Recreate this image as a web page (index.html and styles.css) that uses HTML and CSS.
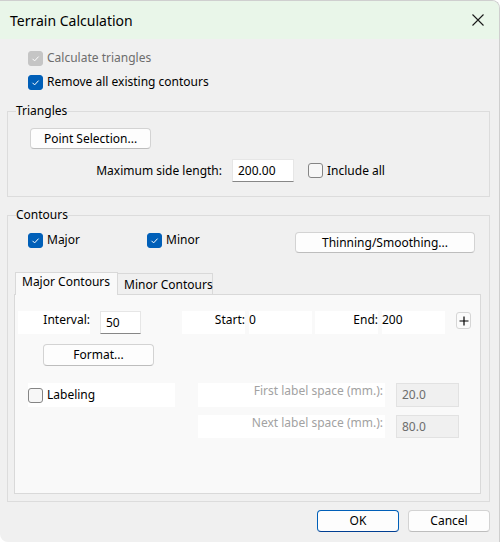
FILE: index.html
```html
<!DOCTYPE html>
<html lang="en">
<head>
  <meta charset="UTF-8">
  <title>Terrain Calculation</title>
  <link rel="stylesheet" href="styles.css">
</head>
<body>
  <div class="window">
    <div class="titlebar">
      <span class="title">Terrain Calculation</span>
      <span class="close">
        <svg width="12" height="12" viewBox="0 0 12 12"><path d="M0.5 0.5 L11.5 11.5 M11.5 0.5 L0.5 11.5" stroke="#1a1a1a" stroke-width="1.1" fill="none"/></svg>
      </span>
    </div>

    <div class="content">
      <div class="checks">
        <label class="check disabled">
          <span class="box checked"><svg width="15" height="15" viewBox="0 0 15 15"><path d="M4.5 7.8 L6.6 9.9 L10.6 5.6" stroke="#fff" stroke-width="1" fill="none"/></svg></span>
          Calculate triangles
        </label>
        <label class="check">
          <span class="box checked"><svg width="15" height="15" viewBox="0 0 15 15"><path d="M4.5 7.8 L6.6 9.9 L10.6 5.6" stroke="#fff" stroke-width="1" fill="none"/></svg></span>
          Remove all existing contours
        </label>
      </div>

      <fieldset class="group triangles">
        <legend>Triangles</legend>
        <button class="btn point-btn">Point Selection...</button>
        <div class="side-row">
          <span class="side-label">Maximum side length:</span>
          <span class="field side-field">200.00</span>
          <label class="check include-all">
            <span class="box"></span>
            Include all
          </label>
        </div>
      </fieldset>

      <fieldset class="group contours">
        <legend>Contours</legend>
        <div class="contour-row">
          <label class="check major-check">
            <span class="box checked"><svg width="15" height="15" viewBox="0 0 15 15"><path d="M4.5 7.8 L6.6 9.9 L10.6 5.6" stroke="#fff" stroke-width="1" fill="none"/></svg></span>
            Major
          </label>
          <label class="check">
            <span class="box checked"><svg width="15" height="15" viewBox="0 0 15 15"><path d="M4.5 7.8 L6.6 9.9 L10.6 5.6" stroke="#fff" stroke-width="1" fill="none"/></svg></span>
            Minor
          </label>
          <button class="btn thin-btn">Thinning/Smoothing...</button>
        </div>

        <div class="tabs">
          <span class="tab active">Major Contours</span>
          <span class="tab">Minor Contours</span>
        </div>
        <div class="tab-panel">
          <div class="panel-row">
            <span class="cell interval-lbl">Interval:</span>
            <span class="field interval-field">50</span>
            <span class="cell range-lbl start-lbl">Start:</span>
            <span class="cell range-val">0</span>
            <span class="cell range-lbl end-lbl">End:</span>
            <span class="cell range-val">200</span>
            <span class="plus-btn">
              <svg width="10" height="10" viewBox="0 0 10 10"><path d="M5 0.5 V9.5 M0.5 5 H9.5" stroke="#000" stroke-width="1.2" fill="none"/></svg>
            </span>
          </div>
          <button class="btn format-btn">Format...</button>
          <div class="panel-row label-row">
            <span class="cell labeling-cell">
              <span class="check">
                <span class="box"></span>
                Labeling
              </span>
            </span>
            <span class="cell space-lbl">First label space (mm.):</span>
            <span class="field space-field">20.0</span>
          </div>
          <div class="panel-row next-row">
            <span class="cell space-lbl">Next label space (mm.):</span>
            <span class="field space-field">80.0</span>
          </div>
        </div>
      </fieldset>

      <div class="dialog-buttons">
        <button class="btn dlg-btn ok-btn">OK</button>
        <button class="btn dlg-btn">Cancel</button>
      </div>
    </div>
  </div>
</body>
</html>
```

FILE: styles.css
```css
* {
  margin: 0;
  padding: 0;
  box-sizing: border-box;
}

html {
  background: #fff;
}

body {
  font-family: "Noto Sans", "Open Sans", sans-serif;
  font-size: 12px;
  color: #000;
}

.window {
  width: 500px;
  height: 542px;
  background: #f0f0f0;
  border-top: 1px solid #cfcfcf;
  border-right: 1px solid #cfcfcf;
  border-top-right-radius: 8px;
  border-bottom-left-radius: 8px;
  overflow: hidden;
}

.titlebar {
  height: 38px;
  background: #e9f6e9;
  display: flex;
  align-items: center;
  justify-content: space-between;
  padding-left: 10px;
}

.title {
  font-size: 14px;
}

.close {
  width: 42px;
  height: 38px;
  display: flex;
  align-items: center;
  justify-content: center;
}

.content {
  padding: 11px 9px 0 7px;
}

.checks {
  padding-left: 21px;
  display: flex;
  flex-direction: column;
  gap: 8px;
}

.check {
  display: flex;
  align-items: center;
  gap: 4px;
  height: 16px;
  line-height: 16px;
  white-space: nowrap;
}

.check.disabled {
  color: #6d6d6d;
}

.box {
  width: 15px;
  height: 15px;
  border-radius: 3px;
  border: 1px solid #858585;
  background: #f7f7f7;
  flex-shrink: 0;
  display: block;
}

.box svg {
  display: block;
  margin: -1px;
}

.box.checked {
  background: #005fb8;
  border-color: #005fb8;
}

.disabled .box.checked {
  background: #c5c5c5;
  border-color: #c5c5c5;
}

/* group boxes */
.group {
  border: 1px solid #dcdcdc;
  min-width: 0;
}

.group legend {
  padding: 0;
  margin-left: 2px;
  line-height: 16px;
}

.triangles {
  margin-top: 13px;
  padding: 9px 8px 14px 6px;
}

.contours {
  margin-top: 10px;
  padding: 9px 8px 7px 6px;
}

.btn {
  font: inherit;
  color: #000;
  height: 21px;
  background: #fdfdfd;
  border: 1px solid #d3d3d3;
  border-bottom-color: #bdbdbd;
  border-radius: 4px;
  line-height: 18px;
  display: block;
}

.point-btn {
  width: 121px;
  margin-left: 16px;
}

.side-row {
  display: flex;
  align-items: center;
  margin-top: 10px;
  height: 23px;
}

.side-label {
  width: 208px;
  text-align: right;
}

.field {
  display: block;
  height: 23px;
  background: #fff;
  border: 1px solid #e6e6e6;
  border-bottom-color: #878787;
  padding-left: 5px;
  line-height: 21px;
}

.side-field {
  width: 62px;
  margin-left: 10px;
}

.include-all {
  margin-left: 14px;
}

/* contours */
.contour-row {
  display: flex;
  align-items: flex-start;
  height: 21px;
}

.major-check {
  width: 119px;
  margin-left: 14px;
}

.thin-btn {
  width: 180px;
  margin-left: auto;
  margin-right: 6px;
}

.tabs {
  display: flex;
  align-items: flex-end;
  margin-top: 19px;
  height: 22px;
  padding-left: 1px;
}

.tab {
  display: block;
  width: 96px;
  height: 21px;
  margin-left: -1px;
  padding: 3px 0 0 6px;
  line-height: 16px;
  background: #f0f0f0;
  border: 1px solid #d9d9d9;
  border-bottom: none;
  white-space: nowrap;
}

.tab.active {
  width: 103px;
  height: 23px;
  margin-left: 0;
  margin-bottom: -1px;
  padding-top: 1px;
  background: #f9f9f9;
  position: relative;
  z-index: 1;
}

.tab-panel {
  height: 200px;
  background: #f9f9f9;
  border: 1px solid #d9d9d9;
  padding: 16px 0 0 3px;
}

.panel-row {
  display: flex;
  align-items: flex-start;
}

.cell {
  display: block;
  background: #fff;
  height: 23px;
  line-height: 16px;
  white-space: nowrap;
}

.interval-lbl {
  width: 72px;
  text-align: right;
  padding-top: 1px;
}

.interval-field {
  width: 41px;
  margin-left: 10px;
}

.range-lbl {
  width: 63px;
  text-align: right;
  padding-top: 1px;
}

.start-lbl {
  margin-left: 41px;
}

.end-lbl {
  margin-left: 3px;
}

.range-val {
  width: 63px;
  margin-left: 4px;
  padding-top: 1px;
}

.plus-btn {
  display: flex;
  align-items: center;
  justify-content: center;
  width: 15px;
  height: 17px;
  margin: 1px 0 0 11px;
  background: #fbfbfb;
  border: 1px solid #d6d6d6;
  border-radius: 3px;
}

.format-btn {
  width: 111px;
  height: 22px;
  margin: 10px 0 0 25px;
}

.label-row {
  margin-top: 17px;
}

.labeling-cell {
  width: 147px;
  height: 24px;
  margin-left: 10px;
  display: flex;
  align-items: center;
}

.space-lbl {
  width: 187px;
  height: 24px;
  margin-left: 23px;
  text-align: right;
  padding-right: 2px;
  color: #a2a2a2;
}

.space-field {
  width: 63px;
  height: 24px;
  margin-left: 11px;
  background: #f0f0f0;
  border: 1px solid #e2e2e2;
  color: #6d6d6d;
  line-height: 22px;
}

.next-row {
  margin-top: 8px;
}

.next-row .space-lbl,
.next-row .space-field {
  height: 23px;
}

.next-row .space-lbl {
  margin-left: 180px;
}

.dialog-buttons {
  display: flex;
  justify-content: flex-end;
  gap: 9px;
  margin-top: 8px;
}

.dlg-btn {
  width: 82px;
  height: 22px;
}

.ok-btn {
  border-color: #005fb8;
  border-bottom-color: #003e92;
}
```
